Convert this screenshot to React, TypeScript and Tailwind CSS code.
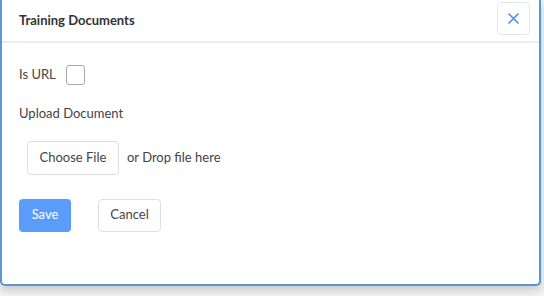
export default function App() {
  return (
    <div
      className="w-[544px] h-[296px] bg-[#f3f3f3] overflow-hidden"
      style={{ fontFamily: "Lato, 'Noto Sans', sans-serif" }}
    >
      <div className="w-[541px] h-[286px] bg-white border-l-2 border-r-2 border-b-2 border-[#5b95d3] rounded-b-[5px] shadow-[0_4px_10px_rgba(0,0,0,0.18)] flex flex-col">
        {/* Header */}
        <div className="h-[43px] flex items-center justify-between pl-[17px] pr-[9px] border-b-2 border-[#ececec]">
          <h2 className="text-[13px] font-bold text-[#333]">Training Documents</h2>
          <button className="w-[33px] h-[33px] -mt-[4px] flex items-center justify-center border border-[#e6e6e6] rounded-[4px] bg-white">
            <svg width="11" height="11" viewBox="0 0 11 11" fill="none" stroke="#4a8fe6" strokeWidth="1.6" strokeLinecap="round">
              <path d="M1 1L10 10M10 1L1 10" />
            </svg>
          </button>
        </div>

        {/* Body */}
        <div className="flex flex-col pl-[17px] pt-[22px] text-[13px] text-[#444]">
          <div className="flex items-center gap-[10px] h-[20px]">
            <span>Is URL</span>
            <span className="w-[19px] h-[20px] border border-[#a8a8a8] rounded-[3px] bg-white" />
          </div>

          <div className="mt-[19px]">Upload Document</div>

          <div className="flex items-center gap-[8px] mt-[17px] ml-[8px]">
            <button className="w-[92px] h-[34px] border border-[#dedede] rounded-[4px] bg-white text-[#444]">
              Choose File
            </button>
            <span>or Drop file here</span>
          </div>

          <div className="flex items-center gap-[27px] mt-[24px]">
            <button className="w-[52px] h-[33px] rounded-[4px] bg-[#5b9cfb] text-white">Save</button>
            <button className="w-[63px] h-[33px] border border-[#dedede] rounded-[4px] bg-white text-[#444]">
              Cancel
            </button>
          </div>
        </div>
      </div>
    </div>
  );
}
